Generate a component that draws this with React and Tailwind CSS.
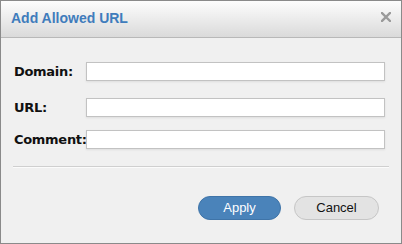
const fields = [
  { label: 'Domain:', mt: 'mt-[24px]' },
  { label: 'URL:', mt: 'mt-[16px]' },
  { label: 'Comment:', mt: 'mt-[13px]' },
];

const App = () => {
  return (
    <div className="w-[402px] h-[244px] bg-[#f0f0f0] border border-[#8a8a8a] flex flex-col font-['Liberation_Sans',Arial,sans-serif]">
      <div className="h-[37px] shrink-0 flex items-center justify-between pl-[10px] pr-[10px] bg-gradient-to-b from-[#fdfdfd] to-[#dadada] border-b border-[#b8b8b8]">
        <h1 className="text-[14px] font-bold text-[#3f7cbc] mt-[-2px]">Add Allowed URL</h1>
        <svg width="10" height="10" viewBox="0 0 10 10" className="mt-[-4px]">
          <path d="M1 1 L9 9 M9 1 L1 9" stroke="#9a9a9a" strokeWidth="2.4" strokeLinecap="square" />
        </svg>
      </div>
      <div className="flex flex-col px-[13px]">
        {fields.map((f) => (
          <div key={f.label} className={`${f.mt} flex items-center`}>
            <label className="w-[72px] text-[13px] font-bold text-[#111] font-['DejaVu_Sans',sans-serif] tracking-[-0.3px]">
              {f.label}
            </label>
            <input
              type="text"
              className="w-[299px] h-[19px] bg-white border border-[#c2c2c2] shadow-[0_1px_2px_rgba(0,0,0,0.08)] outline-none"
            />
          </div>
        ))}
        <div className="mt-[16px] mx-[-1px] h-px bg-[#cfcfcf] shadow-[0_1px_0_#fbfbfb]" />
        <div className="mt-[29px] flex justify-end gap-[13px] pr-[9px]">
          <button className="w-[83px] h-[24px] rounded-full bg-[#4a83ba] border border-[#3f74a8] text-white text-[13px] font-['Liberation_Sans',Arial,sans-serif]">
            Apply
          </button>
          <button className="w-[85px] h-[24px] rounded-full bg-[#e3e3e3] border border-[#c6c6c6] text-[#111] text-[13px] font-['Liberation_Sans',Arial,sans-serif]">
            Cancel
          </button>
        </div>
      </div>
    </div>
  );
};

export default App;
